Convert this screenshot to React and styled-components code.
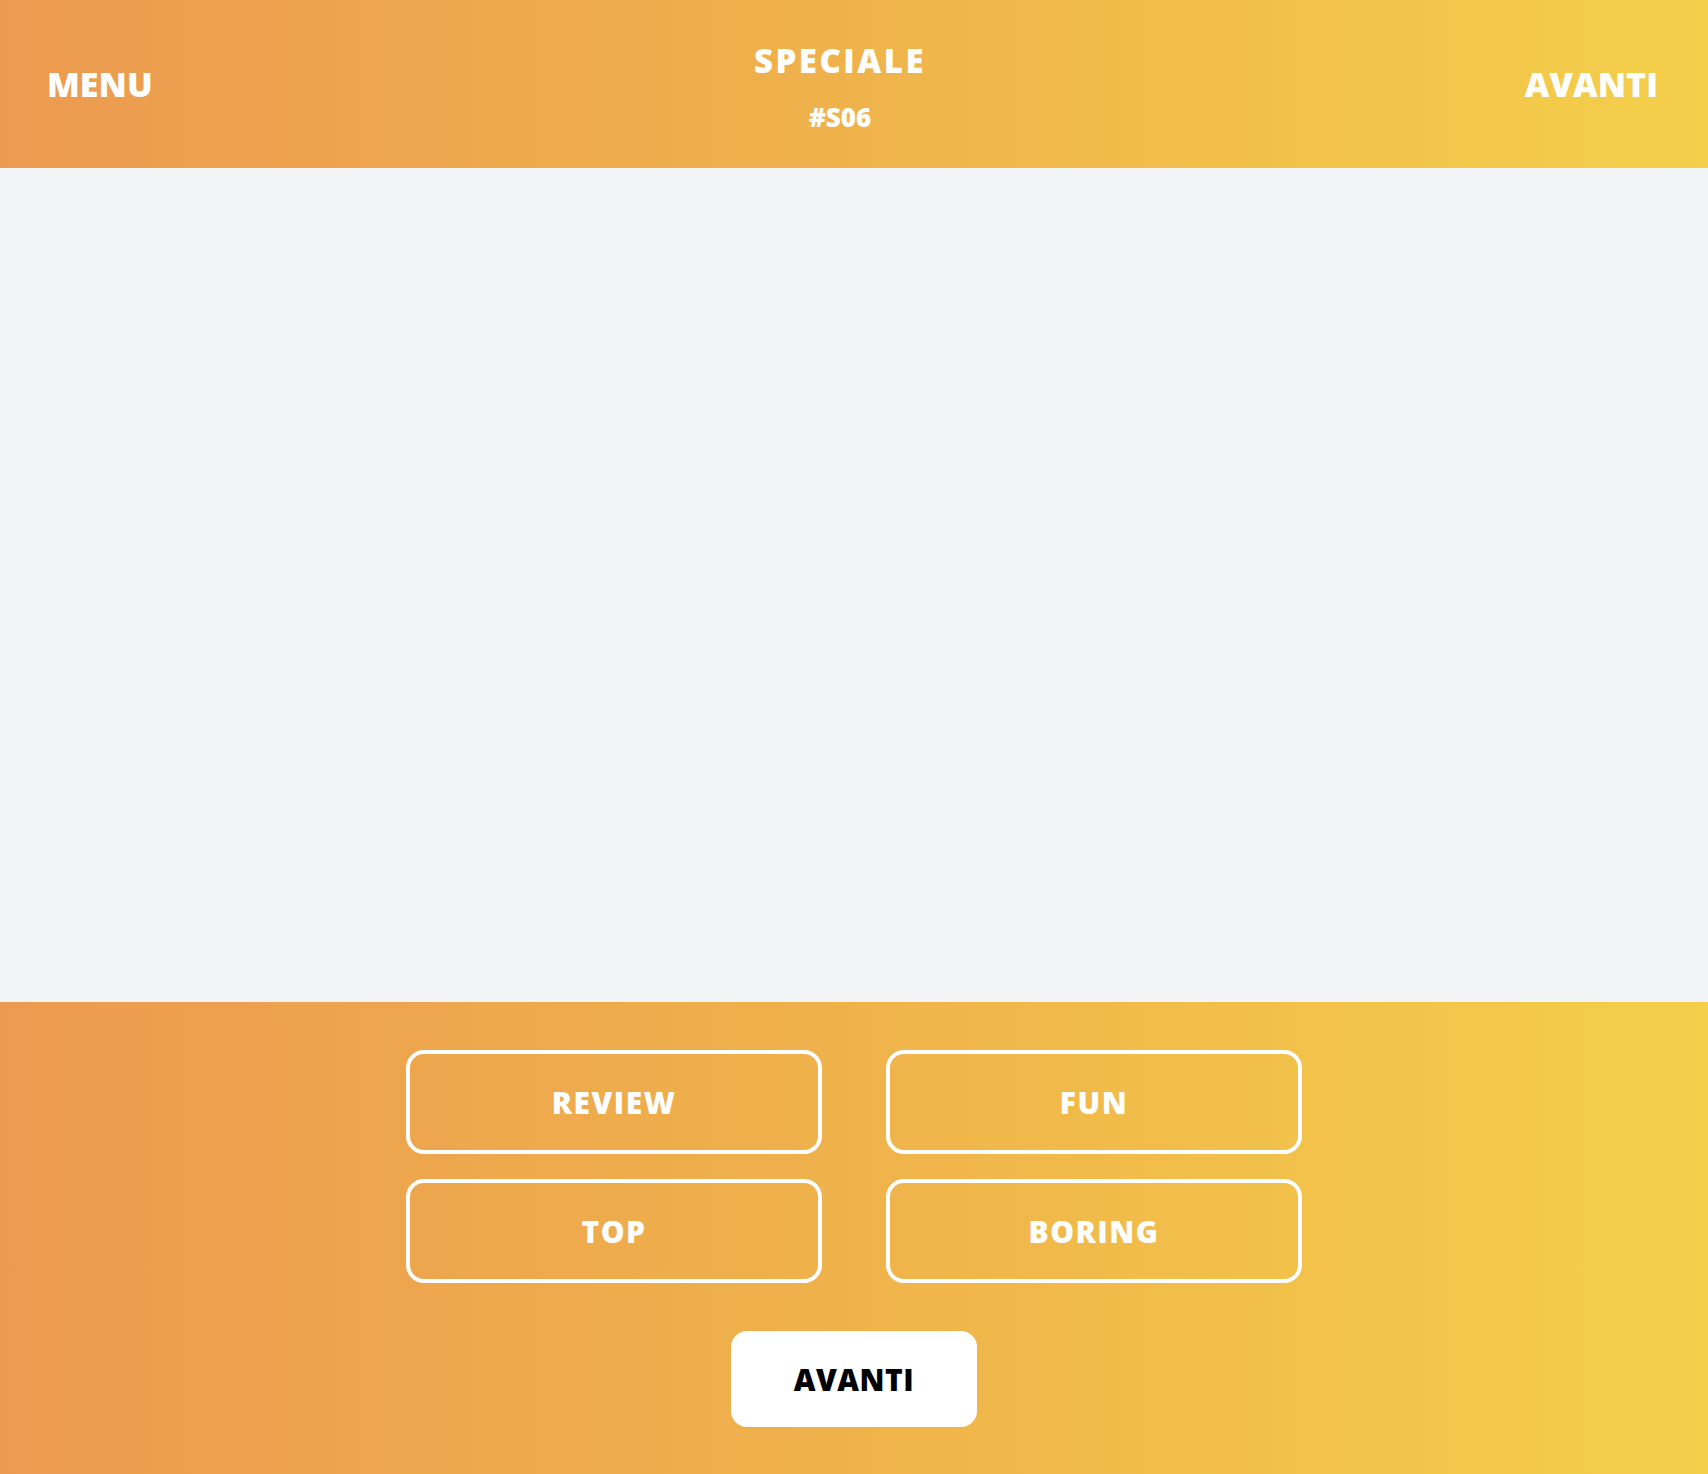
import React from 'react'
import styled, { createGlobalStyle } from 'styled-components'

const GlobalStyle = createGlobalStyle`
  html, body { margin: 0; padding: 0; }
  body {
    font-family: "Open Sans", "Liberation Sans", sans-serif;
    background: #f3f4f6;
  }
  * { box-sizing: border-box; }
`

const gradient = 'linear-gradient(to right, #ec9a50 0%, #efb04b 45%, #f4cf4a 100%)'

const Page = styled.div`
  min-height: 100vh;
  display: flex;
  flex-direction: column;
`

const Header = styled.header`
  height: 168px;
  background: ${gradient};
  display: flex;
  align-items: center;
  justify-content: space-between;
  padding: 0 50px 0 47px;
  color: #fff;
`

const NavLink = styled.a`
  font-size: 34px;
  font-weight: 800;
  color: #fff;
  text-decoration: none;
  cursor: pointer;
  width: 160px;
  text-align: ${p => (p.$right ? 'right' : 'left')};
`

const Title = styled.div`
  display: flex;
  flex-direction: column;
  align-items: center;
  margin: 6px 25px 0 0;
`

const Heading = styled.h1`
  margin: 0;
  font-size: 33px;
  font-weight: 800;
  letter-spacing: 2.5px;
  line-height: 1.2;
`

const Code = styled.span`
  font-size: 26px;
  font-weight: 800;
  margin-top: 21px;
  line-height: 1.2;
`

const Main = styled.main`
  flex: 1;
  background: #f3f4f6;
`

const Footer = styled.footer`
  height: 472px;
  background: ${gradient};
  display: flex;
  flex-direction: column;
  align-items: center;
  padding-top: 48px;
`

const Choices = styled.div`
  display: grid;
  grid-template-columns: 416px 416px;
  column-gap: 64px;
  row-gap: 25px;
`

const Choice = styled.button`
  height: 104px;
  border: 4px solid #fff;
  border-radius: 18px;
  background: transparent;
  color: #fff;
  font-family: inherit;
  font-size: 30px;
  font-weight: 800;
  letter-spacing: 1.5px;
  cursor: pointer;
`

const Next = styled.button`
  margin-top: 48px;
  width: 246px;
  height: 96px;
  border: none;
  border-radius: 16px;
  background: #fff;
  color: #000;
  font-family: inherit;
  font-size: 30px;
  font-weight: 800;
  letter-spacing: 0.5px;
  cursor: pointer;
`

const options = ['REVIEW', 'FUN', 'TOP', 'BORING']

const App = () => {
  return (
    <Page>
      <GlobalStyle />
      <Header>
        <NavLink>MENU</NavLink>
        <Title>
          <Heading>SPECIALE</Heading>
          <Code>#S06</Code>
        </Title>
        <NavLink $right>AVANTI</NavLink>
      </Header>
      <Main />
      <Footer>
        <Choices>
          {options.map(o => (
            <Choice key={o}>{o}</Choice>
          ))}
        </Choices>
        <Next>AVANTI</Next>
      </Footer>
    </Page>
  )
}

export default App
